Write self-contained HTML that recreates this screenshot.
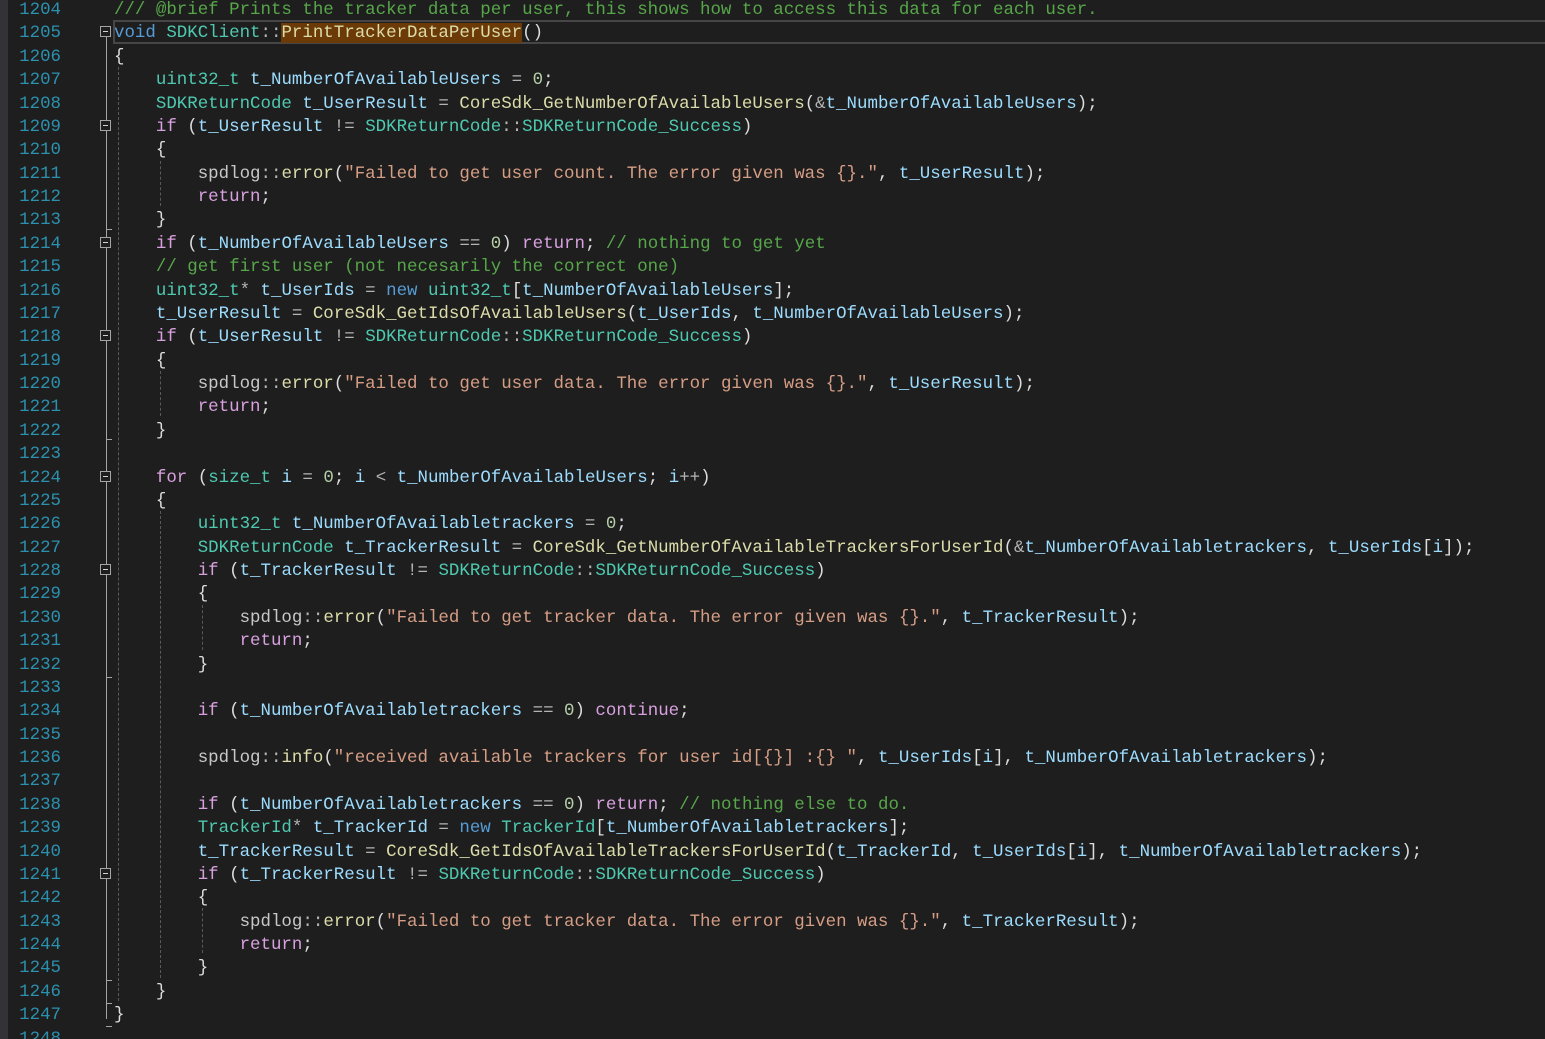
<!DOCTYPE html>
<html><head><meta charset="utf-8"><style>
html,body{margin:0;padding:0;background:#1e1e1e;width:1545px;height:1039px;overflow:hidden;position:relative}
.strip{position:absolute;left:0;top:0;width:8px;height:1039px;background:#333337}
.ln{position:absolute;left:0;width:61px;text-align:right;color:#2b91af;font:17.45px "Liberation Mono",monospace;line-height:23.37px;white-space:pre;top:-1px}
.code{position:absolute;left:114px;top:-1px;color:#dcdcdc;font:17.45px "Liberation Mono",monospace;line-height:23.37px;white-space:pre;font-weight:500}
.cur{position:absolute;left:113px;top:20px;width:1440px;height:20px;border:2px solid #464646}
.k{color:#569cd6}.c{color:#d8a0df}.t{color:#4ec9b0}.v{color:#9cdcfe}.f{color:#dcdcaa}.s{color:#d69d85}.cm{color:#57a64a}.n{color:#b5cea8}.o{color:#b4b4b4}.g{color:#c8c8c8}
.hl{background:#6b3a06}
.fl{position:absolute;left:106px;width:1px;background:#a5a5a5}
.box{position:absolute;left:100px;width:9px;height:9px;border:1px solid #a5a5a5;background:#1e1e1e}
.box:after{content:"";position:absolute;left:2px;top:4px;width:5px;height:1px;background:#d0d0d0}
.tk{position:absolute;left:106px;width:6px;height:1px;background:#a5a5a5}
.gd{position:absolute;width:0;border-left:1px dashed #5a5a5a}
</style></head><body>
<div class="strip"></div>
<div class="cur"></div>
<div class="ln">1204
1205
1206
1207
1208
1209
1210
1211
1212
1213
1214
1215
1216
1217
1218
1219
1220
1221
1222
1223
1224
1225
1226
1227
1228
1229
1230
1231
1232
1233
1234
1235
1236
1237
1238
1239
1240
1241
1242
1243
1244
1245
1246
1247
1248</div>
<div class="fl" style="top:37px;height:982px"></div>
<div class="box" style="top:26px"></div>
<div class="box" style="top:120px"></div>
<div class="box" style="top:237px"></div>
<div class="box" style="top:330px"></div>
<div class="box" style="top:471px"></div>
<div class="box" style="top:564px"></div>
<div class="box" style="top:868px"></div>
<div class="tk" style="top:229px"></div>
<div class="tk" style="top:439px"></div>
<div class="tk" style="top:677px"></div>
<div class="tk" style="top:980px"></div>
<div class="tk" style="top:1003px"></div>
<div class="tk" style="top:1026px"></div>
<div class="gd" style="left:118px;top:67px;height:934px"></div>
<div class="gd" style="left:160px;top:161px;height:45px"></div>
<div class="gd" style="left:160px;top:371px;height:45px"></div>
<div class="gd" style="left:160px;top:511px;height:467px"></div>
<div class="gd" style="left:202px;top:605px;height:45px"></div>
<div class="gd" style="left:202px;top:908px;height:45px"></div>
<div class="code"><span class="cm">/// @brief Prints the tracker data per user, this shows how to access this data for each user.</span>
<span class="k">void</span> <span class="t">SDKClient</span><span class="o">::</span><span class="f hl">PrintTrackerDataPerUser</span>()
{
    <span class="t">uint32_t</span> <span class="v">t_NumberOfAvailableUsers</span> <span class="o">=</span> <span class="n">0</span>;
    <span class="t">SDKReturnCode</span> <span class="v">t_UserResult</span> <span class="o">=</span> <span class="f">CoreSdk_GetNumberOfAvailableUsers</span>(<span class="o">&amp;</span><span class="v">t_NumberOfAvailableUsers</span>);
    <span class="c">if</span> (<span class="v">t_UserResult</span> <span class="o">!=</span> <span class="t">SDKReturnCode</span><span class="o">::</span><span class="t">SDKReturnCode_Success</span>)
    {
        <span class="g">spdlog</span><span class="o">::</span><span class="f">error</span>(<span class="s">"Failed to get user count. The error given was {}."</span>, <span class="v">t_UserResult</span>);
        <span class="c">return</span>;
    }
    <span class="c">if</span> (<span class="v">t_NumberOfAvailableUsers</span> <span class="o">==</span> <span class="n">0</span>) <span class="c">return</span>; <span class="cm">// nothing to get yet</span>
    <span class="cm">// get first user (not necesarily the correct one)</span>
    <span class="t">uint32_t</span><span class="o">*</span> <span class="v">t_UserIds</span> <span class="o">=</span> <span class="k">new</span> <span class="t">uint32_t</span>[<span class="v">t_NumberOfAvailableUsers</span>];
    <span class="v">t_UserResult</span> <span class="o">=</span> <span class="f">CoreSdk_GetIdsOfAvailableUsers</span>(<span class="v">t_UserIds</span>, <span class="v">t_NumberOfAvailableUsers</span>);
    <span class="c">if</span> (<span class="v">t_UserResult</span> <span class="o">!=</span> <span class="t">SDKReturnCode</span><span class="o">::</span><span class="t">SDKReturnCode_Success</span>)
    {
        <span class="g">spdlog</span><span class="o">::</span><span class="f">error</span>(<span class="s">"Failed to get user data. The error given was {}."</span>, <span class="v">t_UserResult</span>);
        <span class="c">return</span>;
    }

    <span class="c">for</span> (<span class="t">size_t</span> <span class="v">i</span> <span class="o">=</span> <span class="n">0</span>; <span class="v">i</span> <span class="o">&lt;</span> <span class="v">t_NumberOfAvailableUsers</span>; <span class="v">i</span><span class="o">++</span>)
    {
        <span class="t">uint32_t</span> <span class="v">t_NumberOfAvailabletrackers</span> <span class="o">=</span> <span class="n">0</span>;
        <span class="t">SDKReturnCode</span> <span class="v">t_TrackerResult</span> <span class="o">=</span> <span class="f">CoreSdk_GetNumberOfAvailableTrackersForUserId</span>(<span class="o">&amp;</span><span class="v">t_NumberOfAvailabletrackers</span>, <span class="v">t_UserIds</span>[<span class="v">i</span>]);
        <span class="c">if</span> (<span class="v">t_TrackerResult</span> <span class="o">!=</span> <span class="t">SDKReturnCode</span><span class="o">::</span><span class="t">SDKReturnCode_Success</span>)
        {
            <span class="g">spdlog</span><span class="o">::</span><span class="f">error</span>(<span class="s">"Failed to get tracker data. The error given was {}."</span>, <span class="v">t_TrackerResult</span>);
            <span class="c">return</span>;
        }

        <span class="c">if</span> (<span class="v">t_NumberOfAvailabletrackers</span> <span class="o">==</span> <span class="n">0</span>) <span class="c">continue</span>;

        <span class="g">spdlog</span><span class="o">::</span><span class="f">info</span>(<span class="s">"received available trackers for user id[{}] :{} "</span>, <span class="v">t_UserIds</span>[<span class="v">i</span>], <span class="v">t_NumberOfAvailabletrackers</span>);

        <span class="c">if</span> (<span class="v">t_NumberOfAvailabletrackers</span> <span class="o">==</span> <span class="n">0</span>) <span class="c">return</span>; <span class="cm">// nothing else to do.</span>
        <span class="t">TrackerId</span><span class="o">*</span> <span class="v">t_TrackerId</span> <span class="o">=</span> <span class="k">new</span> <span class="t">TrackerId</span>[<span class="v">t_NumberOfAvailabletrackers</span>];
        <span class="v">t_TrackerResult</span> <span class="o">=</span> <span class="f">CoreSdk_GetIdsOfAvailableTrackersForUserId</span>(<span class="v">t_TrackerId</span>, <span class="v">t_UserIds</span>[<span class="v">i</span>], <span class="v">t_NumberOfAvailabletrackers</span>);
        <span class="c">if</span> (<span class="v">t_TrackerResult</span> <span class="o">!=</span> <span class="t">SDKReturnCode</span><span class="o">::</span><span class="t">SDKReturnCode_Success</span>)
        {
            <span class="g">spdlog</span><span class="o">::</span><span class="f">error</span>(<span class="s">"Failed to get tracker data. The error given was {}."</span>, <span class="v">t_TrackerResult</span>);
            <span class="c">return</span>;
        }
    }
}
</div>
</body></html>
